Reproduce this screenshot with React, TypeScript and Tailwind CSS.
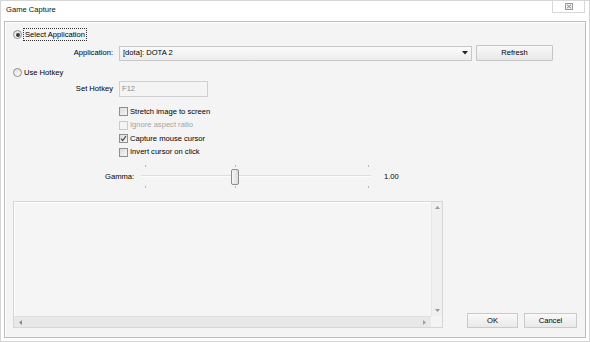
import React from "react";

const font = { fontFamily: '"Liberation Sans", Arial, sans-serif' };

function Radio({ checked }: { checked?: boolean }) {
  return (
    <div className="w-[9px] h-[9px] rounded-full border border-[#8e8e8e] bg-gradient-to-b from-[#e2e2e2] to-[#fafafa] flex items-center justify-center shrink-0">
      {checked && <div className="w-[4px] h-[4px] rounded-full bg-[#3a3a3a]" />}
    </div>
  );
}

function Check({ checked, disabled, label }: { checked?: boolean; disabled?: boolean; label: string }) {
  return (
    <div className="h-[13.5px] flex items-center pl-[114px]">
      <div
        className={
          "w-[9px] h-[9px] border shrink-0 flex items-center justify-center " +
          (disabled ? "border-[#cacaca] bg-[#f4f4f4]" : "border-[#8f8f8f] bg-gradient-to-br from-[#dcdcdc] to-[#f6f6f6]")
        }
      >
        {checked && (
          <svg width="7" height="7" viewBox="0 0 7 7">
            <path d="M1 3.6 L2.8 5.6 L6 1" fill="none" stroke="#3c3c3c" strokeWidth="1.1" />
          </svg>
        )}
      </div>
      <span className={"ml-[2px] " + (disabled ? "text-[#a4a4a4]" : "text-[#000]")}>{label}</span>
    </div>
  );
}

export default function App() {
  return (
    <div
      className="w-[590px] h-[342px] bg-white border border-[#d6d6d6] flex flex-col text-[7.6px] text-[#000] leading-none"
      style={font}
    >
      {/* title bar */}
      <div className="h-[20px] flex items-start justify-between shrink-0">
        <span className="mt-[5px] ml-[5px] text-[#111]">Game Capture</span>
        <div className="w-[33px] h-[13px] mr-[4px] -mt-px border border-[#d8d8d8] bg-white flex items-center justify-center">
          <svg width="8" height="7" viewBox="0 0 8 7">
            <rect x="0.5" y="0.5" width="7" height="6" fill="#f0f0f0" stroke="#9a9a9a" strokeWidth="1" />
            <path d="M2 1.8 L6 5.2 M6 1.8 L2 5.2" stroke="#8a8a8a" strokeWidth="1" />
          </svg>
        </div>
      </div>

      {/* main panel */}
      <div className="flex-1 mx-[3px] mb-[3px] border border-[#bdbdbd] bg-[#f4f4f4] flex flex-col pt-[6px] shadow-[inset_1px_1px_0_#ffffff]">
        {/* Select Application */}
        <div className="h-[13px] flex items-center pl-[8px]">
          <Radio checked />
          <div className="ml-[1px] h-[13px] px-[1px] flex items-center border border-dotted border-[#333]">
            Select Application
          </div>
        </div>

        {/* Application row */}
        <div className="mt-[4px] h-[16px] flex items-center">
          <div className="w-[108px] text-right">Application:</div>
          <div className="ml-[6px] w-[353px] h-[15px] border border-[#c8c8c8] bg-gradient-to-b from-[#fbfbfb] to-[#ececec] flex items-center justify-between pl-[3px] pr-[3px]">
            <span>[dota]: DOTA 2</span>
            <svg width="6" height="4" viewBox="0 0 6 4">
              <path d="M0 0 H6 L3 3.5 Z" fill="#222" />
            </svg>
          </div>
          <div className="ml-[4px] w-[77px] h-[16px] border border-[#c6c6c6] bg-gradient-to-b from-[#f8f8f8] to-[#e8e8e8] flex items-center justify-center rounded-[1px]">
            Refresh
          </div>
        </div>

        {/* Use Hotkey */}
        <div className="mt-[5px] h-[13px] flex items-center pl-[8px]">
          <Radio />
          <span className="ml-[2px]">Use Hotkey</span>
        </div>

        {/* Set Hotkey */}
        <div className="mt-[2px] h-[16px] flex items-center">
          <div className="w-[108px] text-right">Set Hotkey</div>
          <div className="ml-[6px] w-[89px] h-[16px] border border-[#d0d0d0] bg-[#f4f4f4] flex items-center pl-[2px] text-[#8a8a8a]">
            F12
          </div>
        </div>

        {/* Checkboxes */}
        <div className="mt-[8px] flex flex-col">
          <Check label="Stretch image to screen" />
          <Check label="Ignore aspect ratio" disabled />
          <Check label="Capture mouse cursor" checked />
          <Check label="Invert cursor on click" />
        </div>

        {/* Gamma */}
        <div className="mt-[6px] h-[24px] flex items-center pl-[100px]">
          <div className="w-[35px]">Gamma:</div>
          <div className="relative w-[233px] h-[24px]">
            <div className="absolute left-[1px] right-[2px] top-[10px] h-[2px] bg-[#dedede] border-b border-[#fbfbfb]" />
            <div className="absolute left-[5px] top-0 w-px h-[2px] bg-[#b8b8b8]" />
            <div className="absolute left-[95px] top-0 w-px h-[2px] bg-[#b8b8b8]" />
            <div className="absolute left-[228px] top-0 w-px h-[2px] bg-[#b8b8b8]" />
            <div className="absolute left-[5px] top-[21px] w-px h-[2px] bg-[#b8b8b8]" />
            <div className="absolute left-[95px] top-[21px] w-px h-[2px] bg-[#b8b8b8]" />
            <div className="absolute left-[228px] top-[21px] w-px h-[2px] bg-[#b8b8b8]" />
            <div className="absolute left-[91px] top-[4px] w-[8px] h-[16px] rounded-[2px] border border-[#8c8c8c] bg-gradient-to-r from-[#f6f6f6] to-[#dcdcdc]" />
          </div>
          <div className="ml-[11px]">1.00</div>
        </div>

        {/* bottom area */}
        <div className="mt-[12px] flex items-end">
          <div className="ml-[8px] w-[430px] h-[127px] border border-[#d6d6d6] bg-[#f5f5f5] flex flex-col shadow-[inset_1px_1px_0_#ffffff]">
            <div className="flex-1 flex">
              <div className="flex-1" />
              <div className="w-[11px] bg-[#f0f0f0] border-l border-[#e6e6e6] flex flex-col items-center justify-between py-[4px]">
                <svg width="5" height="3" viewBox="0 0 5 3">
                  <path d="M0 3 L2.5 0 L5 3 Z" fill="#9a9a9a" />
                </svg>
                <svg width="5" height="3" viewBox="0 0 5 3">
                  <path d="M0 0 L2.5 3 L5 0 Z" fill="#9a9a9a" />
                </svg>
              </div>
            </div>
            <div className="h-[11px] flex">
              <div className="flex-1 bg-[#e8e8e8] border-t border-[#e0e0e0] flex items-center justify-between px-[5px]">
                <svg width="3" height="5" viewBox="0 0 3 5">
                  <path d="M3 0 L0 2.5 L3 5 Z" fill="#8a8a8a" />
                </svg>
                <svg width="3" height="5" viewBox="0 0 3 5">
                  <path d="M0 0 L3 2.5 L0 5 Z" fill="#a0a0a0" />
                </svg>
              </div>
              <div className="w-[11px] bg-[#f4f4f4]" />
            </div>
          </div>
          <div className="ml-[24px] w-[51px] h-[15px] border border-[#cacaca] bg-gradient-to-b from-[#f9f9f9] to-[#e9e9e9] flex items-center justify-center">
            OK
          </div>
          <div className="ml-[6px] w-[53px] h-[15px] border border-[#cacaca] bg-gradient-to-b from-[#f9f9f9] to-[#e9e9e9] flex items-center justify-center">
            Cancel
          </div>
        </div>
      </div>
    </div>
  );
}
